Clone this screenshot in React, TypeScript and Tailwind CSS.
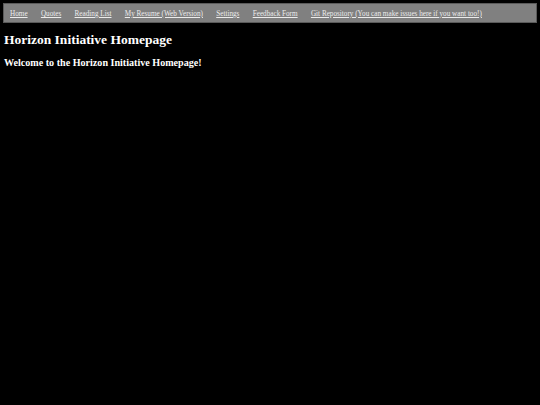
import React from "react";

const links = [
  "Home",
  "Quotes",
  "Reading List",
  "My Resume (Web Version)",
  "Settings",
  "Feedback Form",
  "Git Repository (You can make issues here if you want too!)",
];

export default function App() {
  return (
    <div
      className="min-h-screen w-full bg-black text-white px-[3px] pt-[3px]"
      style={{ fontFamily: '"Liberation Serif", "Times New Roman", serif' }}
    >
      <nav className="flex h-[20px] items-center gap-[13.3px] border border-[#5a5a5a] bg-[#808080] px-[6px] pt-[3px]">
        {links.map((l) => (
          <a
            key={l}
            href="#"
            className="text-[7.2px] leading-none text-[#ececec] underline"
          >
            {l}
          </a>
        ))}
      </nav>
      <h1 className="mt-[9px] ml-px text-[13.5px] font-bold leading-[16px]">
        Horizon Initiative Homepage
      </h1>
      <h2 className="mt-[9px] ml-px text-[10.1px] font-bold leading-[12px]">
        Welcome to the Horizon Initiative Homepage!
      </h2>
    </div>
  );
}
